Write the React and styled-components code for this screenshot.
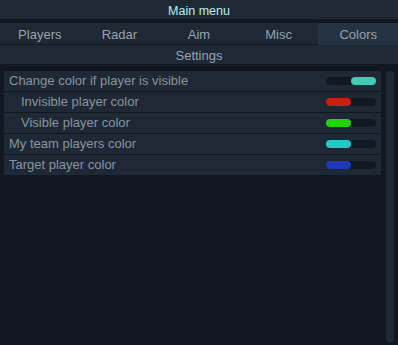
import React from 'react';
import styled, { createGlobalStyle } from 'styled-components';

const GlobalStyle = createGlobalStyle`
	html, body {
		margin: 0;
		padding: 0;
		background: #111822;
	}
	body {
		font-family: 'Liberation Sans', Arial, sans-serif;
		font-size: 13px;
	}
`;

const tabs = ['Players', 'Radar', 'Aim', 'Misc', 'Colors'];

const rows = [
	{ label: 'Change color if player is visible', toggle: true, color: '#45c9b9' },
	{ label: 'Invisible player color', indent: true, color: '#c8200c' },
	{ label: 'Visible player color', indent: true, color: '#22d40b' },
	{ label: 'My team players color', color: '#22c9c9' },
	{ label: 'Target player color', color: '#1f39b5' },
];

const App = () => (
	<Window>
		<GlobalStyle />
		<TitleBar>Main menu</TitleBar>
		<TabBar>
			{tabs.map(t => (
				<Tab key={t} active={t === 'Colors'}>
					{t}
				</Tab>
			))}
		</TabBar>
		<SubHeader>Settings</SubHeader>
		<Body>
			<List>
				{rows.map(r => (
					<Row key={r.label}>
						<Label indent={r.indent}>{r.label}</Label>
						<Bar>
							<Fill color={r.color} right={r.toggle} />
						</Bar>
					</Row>
				))}
			</List>
			<Scrollbar />
		</Body>
	</Window>
);

const Window = styled.div`
	display: flex;
	flex-direction: column;
	width: 398px;
	height: 345px;
	background: #111822;
	overflow: hidden;
`;

const TitleBar = styled.div`
	height: 19px;
	line-height: 22px;
	font-size: 12.5px;
	text-align: center;
	background: #1f2935;
	color: #b5f1f1;
`;

const TabBar = styled.div`
	display: grid;
	grid-template-columns: repeat(5, 1fr);
	margin-top: 4px;
	height: 21px;
	background: #1f2935;
	border-bottom: 1px solid #111822;
`;

const Tab = styled.div`
	line-height: 23px;
	text-align: center;
	color: #97a3b0;
	background: ${props => (props.active ? '#253241' : 'transparent')};
`;

const SubHeader = styled.div`
	height: 19px;
	line-height: 21px;
	text-align: center;
	background: #1f2935;
	color: #97a3b0;
`;

const Body = styled.div`
	display: flex;
	flex: 1;
	padding: 7px 4px 2px 4px;
	gap: 5px;
`;

const List = styled.div`
	display: flex;
	flex-direction: column;
	align-self: flex-start;
	width: 377px;
`;

const Row = styled.div`
	display: flex;
	align-items: center;
	justify-content: space-between;
	height: 20px;
	background: #1f2935;
	border-bottom: 1px solid #111822;
	&:last-child {
		border-bottom: none;
	}
`;

const Label = styled.span`
	padding-left: ${props => (props.indent ? '17px' : '5px')};
	color: #87939f;
	line-height: 22px;
`;

const Bar = styled.div`
	position: relative;
	width: 50px;
	height: 8px;
	margin-right: 5px;
	border-radius: 4px;
	background: #111a23;
`;

const Fill = styled.div`
	position: absolute;
	top: 0;
	${props => (props.right ? 'right: 0;' : 'left: 0;')}
	width: 25px;
	height: 8px;
	border-radius: 4px;
	background: ${props => props.color};
`;

const Scrollbar = styled.div`
	width: 8px;
	border-radius: 4px;
	background: #1f2935;
`;

export default App;
